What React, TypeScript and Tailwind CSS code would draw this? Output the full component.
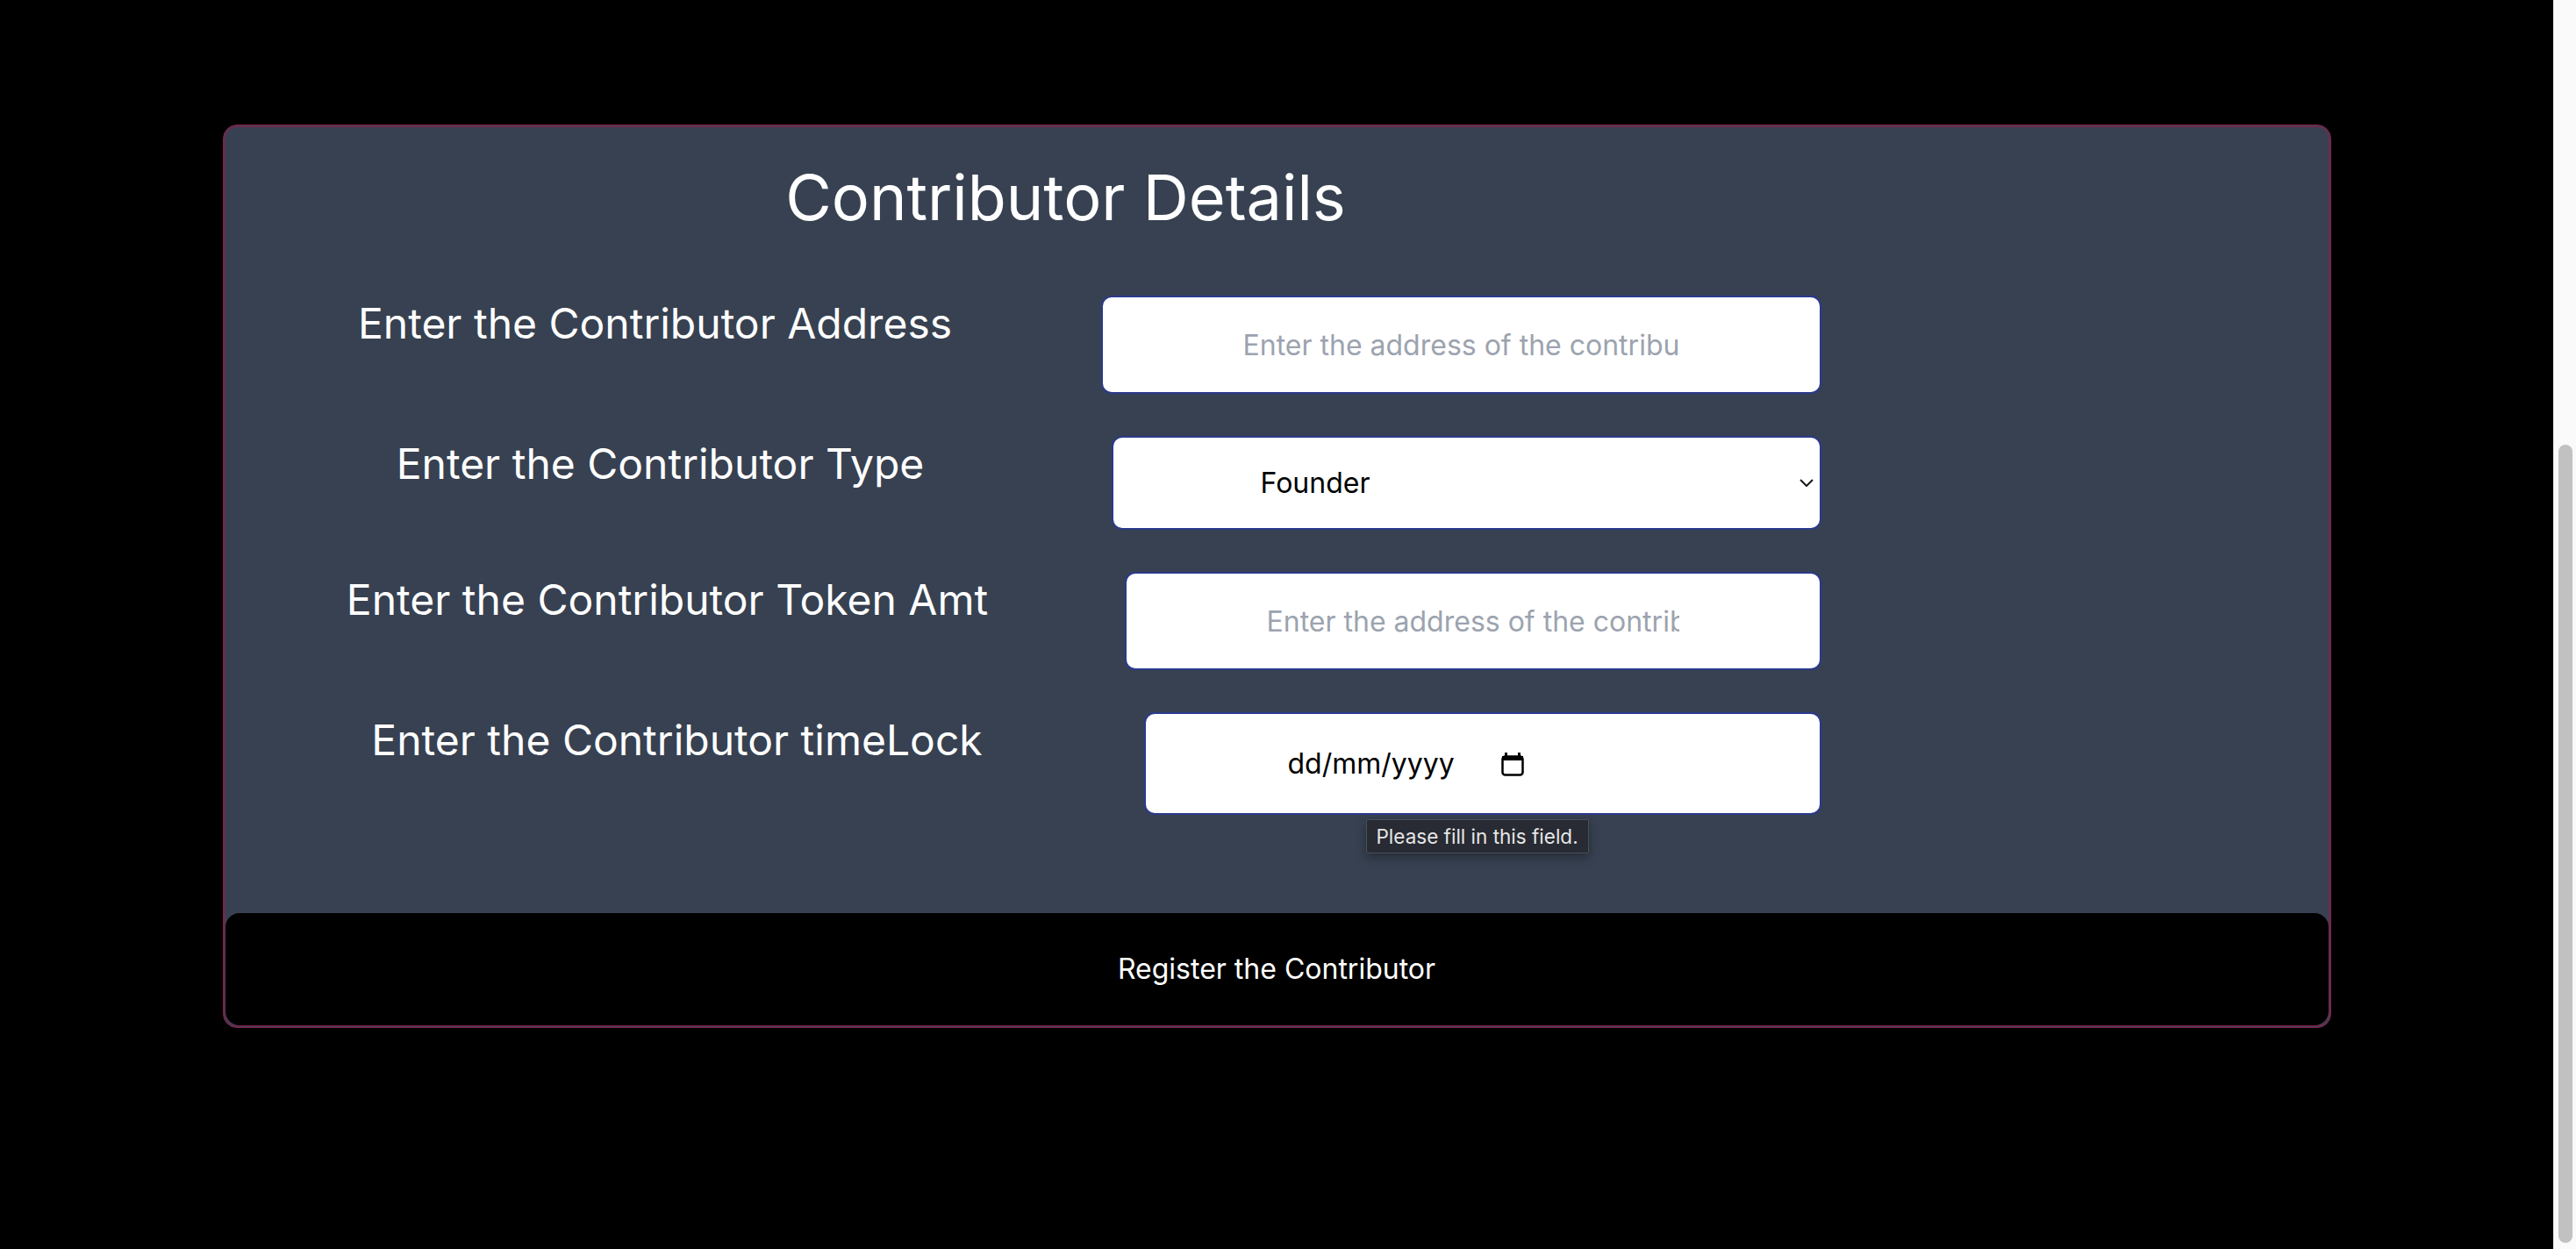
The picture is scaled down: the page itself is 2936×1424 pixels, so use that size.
import React, { useState } from "react";

const rows = [
  { label: "Enter the Contributor Address", labelW: "w-[980px]", inputW: "w-[821px]", h: "h-[112px]" },
  { label: "Enter the Contributor Type", labelW: "w-[992px]", inputW: "w-[809px]", h: "h-[107px]" },
  { label: "Enter the Contributor Token Amt", labelW: "w-[1008px]", inputW: "w-[794px]", h: "h-[112px]" },
  { label: "Enter the Contributor timeLock", labelW: "w-[1030px]", inputW: "w-[772px]", h: "h-[117px]" },
];

const CalendarIcon = () => (
  <svg width="26" height="28" viewBox="0 0 26 28" fill="none">
    <rect x="1.5" y="5.5" width="23" height="21" rx="3" stroke="#000" strokeWidth="2.5" />
    <rect x="1" y="5" width="24" height="5" fill="#000" />
    <rect x="4" y="1" width="3" height="6" fill="#000" />
    <rect x="19" y="1" width="3" height="6" fill="#000" />
  </svg>
);

const App: React.FC = () => {
  const [address, setAddress] = useState("");
  const [type, setType] = useState("Founder");
  const [amount, setAmount] = useState("");

  const inputCls =
    "rounded-xl border-2 border-[#2a3a8c] bg-white px-[160px] text-center text-[32px] leading-[48px] text-black placeholder:text-[#9ca3af] outline-none";

  return (
    <div className="flex h-[1424px] bg-black" style={{ fontFamily: "Inter, 'Noto Sans', sans-serif" }}>
      <div className="flex flex-1 flex-col items-center pt-[142px]">
        <div className="flex w-[2403px] flex-col overflow-hidden rounded-[16px] border-[3px] border-double border-[#86214c] bg-[#374151]">
          <div className="w-[1916px] pt-[40px] pb-[112px]">
            <h1 className="text-center text-[72px] leading-[80px] font-normal text-white">Contributor Details</h1>

            <div className="mt-[72px] flex flex-col gap-[48px] pr-[97px]">
              {/* address */}
              <div className="flex items-start">
                <label className={`${rows[0].labelW} text-center text-[48px] leading-[64px] text-white`}>{rows[0].label}</label>
                <input
                  type="text"
                  value={address}
                  onChange={(e) => setAddress(e.target.value)}
                  placeholder="Enter the address of the contributor"
                  className={`ml-auto ${rows[0].inputW} ${rows[0].h} ${inputCls}`}
                />
              </div>

              {/* type */}
              <div className="flex items-start">
                <label className={`${rows[1].labelW} text-center text-[48px] leading-[64px] text-white`}>{rows[1].label}</label>
                <div className={`relative ml-auto ${rows[1].inputW} ${rows[1].h}`}>
                  <select
                    value={type}
                    onChange={(e) => setType(e.target.value)}
                    className="h-full w-full appearance-none rounded-xl border-2 border-[#2a3a8c] bg-white pl-[168px] text-left text-[32px] text-black outline-none"
                  >
                    <option>Founder</option>
                    <option>Advisor</option>
                    <option>Employee</option>
                  </select>
                  <svg
                    className="pointer-events-none absolute right-[9px] top-[49px]"
                    width="16"
                    height="9"
                    viewBox="0 0 16 9"
                    fill="none"
                  >
                    <path d="M1 1l7 7 7-7" stroke="#1a1a1a" strokeWidth="2" />
                  </svg>
                </div>
              </div>

              {/* token amount */}
              <div className="flex items-start">
                <label className={`${rows[2].labelW} text-center text-[48px] leading-[64px] text-white`}>{rows[2].label}</label>
                <input
                  type="text"
                  value={amount}
                  onChange={(e) => setAmount(e.target.value)}
                  placeholder="Enter the address of the contributor"
                  className={`ml-auto ${rows[2].inputW} ${rows[2].h} ${inputCls}`}
                />
              </div>

              {/* timelock */}
              <div className="flex items-start">
                <label className={`${rows[3].labelW} text-center text-[48px] leading-[64px] text-white`}>{rows[3].label}</label>
                <div className={`relative ml-auto ${rows[3].inputW} ${rows[3].h}`}>
                  <div className="flex h-full items-center rounded-xl border-2 border-[#2a3a8c] bg-white pl-[162px] text-[32px] text-black">
                    <span className="w-[243px]">dd/mm/yyyy</span>
                    <CalendarIcon />
                  </div>
                  <div className="absolute left-[253px] top-full mt-[5px] flex h-[39px] items-center rounded-[2px] border border-[#4b4e57] bg-[#282b33] px-[11px] text-[22.5px] text-[#e6e6e6] shadow-[0_4px_12px_rgba(0,0,0,0.35)]">
                    Please fill in this field.
                  </div>
                </div>
              </div>
            </div>
          </div>

          <button className="h-[128px] w-full rounded-[16px] bg-black text-[32px] text-white">
            Register the Contributor
          </button>
        </div>
      </div>

      {/* scrollbar */}
      <div className="flex w-[26px] flex-col items-center border-l border-[#ebebeb] bg-[#fafafa] pt-[507px] pb-[7px]">
        <div className="w-[16px] flex-1 rounded-full bg-[#c1c1c1]" />
      </div>
    </div>
  );
};

export default App;
